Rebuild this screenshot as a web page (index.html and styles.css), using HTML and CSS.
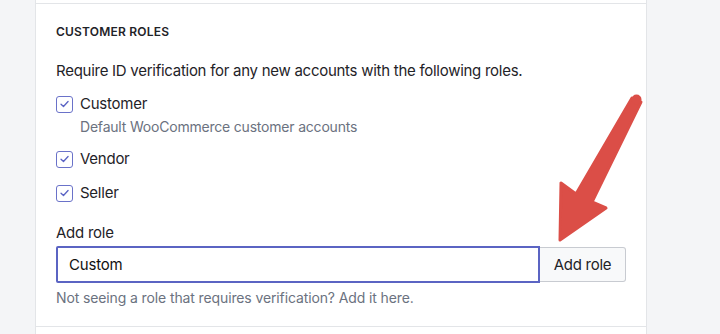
FILE: index.html
```html
<!DOCTYPE html>
<html lang="en">
<head>
<meta charset="utf-8">
<title>Customer roles</title>
<link rel="stylesheet" href="styles.css">
</head>
<body>
<div class="page">
  <div class="gutter"></div>
  <div class="card">
    <div class="card-top"></div>
    <section class="section">
      <h2 class="heading">Customer roles</h2>
      <p class="intro">Require ID verification for any new accounts with the following roles.</p>
      <div class="options">
        <div class="option">
          <label class="check-row"><span class="box"><svg viewBox="0 0 16 16" width="16" height="16"><path d="M4.3 8.2 L6.9 10.7 L11.8 5.4" fill="none" stroke="#5a63c4" stroke-width="1.4" stroke-linecap="round" stroke-linejoin="round"/></svg></span><span class="check-label">Customer</span></label>
          <div class="option-desc">Default WooCommerce customer accounts</div>
        </div>
        <div class="option">
          <label class="check-row"><span class="box"><svg viewBox="0 0 16 16" width="16" height="16"><path d="M4.3 8.2 L6.9 10.7 L11.8 5.4" fill="none" stroke="#5a63c4" stroke-width="1.4" stroke-linecap="round" stroke-linejoin="round"/></svg></span><span class="check-label">Vendor</span></label>
        </div>
        <div class="option">
          <label class="check-row"><span class="box"><svg viewBox="0 0 16 16" width="16" height="16"><path d="M4.3 8.2 L6.9 10.7 L11.8 5.4" fill="none" stroke="#5a63c4" stroke-width="1.4" stroke-linecap="round" stroke-linejoin="round"/></svg></span><span class="check-label">Seller</span></label>
        </div>
      </div>
      <div class="field-label">Add role</div>
      <div class="field-row">
        <div class="input">Custom</div>
        <button class="btn" type="button">Add role</button>
      </div>
      <p class="help">Not seeing a role that requires verification? Add it here.</p>
    </section>
  </div>
  <div class="gutter-right"></div>
</div>
<svg class="arrow" width="720" height="334" viewBox="0 0 720 334">
  <polygon points="632,98 576,194 561,183 560,240 606,208 592,202 641,102" fill="#db4e47" stroke="#db4e47" stroke-width="3" stroke-linejoin="round"/>
  <circle cx="636.5" cy="99.5" r="5" fill="#db4e47"/>
</svg>
</body>
</html>
```

FILE: styles.css
```css
* { box-sizing: border-box; }
html, body { margin: 0; padding: 0; }
body {
  width: 720px;
  height: 334px;
  overflow: hidden;
  background: #f4f5f7;
  font-family: Inter, "Noto Sans", "Liberation Sans", sans-serif;
  color: #1f2328;
  position: relative;
}
.page {
  display: flex;
  height: 334px;
}
.gutter { width: 35px; flex: none; }
.gutter-right { flex: 1; }
.card {
  width: 612px;
  flex: none;
  background: #fff;
  border-left: 1px solid #e3e5e8;
  border-right: 1px solid #e3e5e8;
}
.card-top { height: 3px; }
.section {
  border-top: 1px solid #e3e5e8;
  border-bottom: 1px solid #e3e5e8;
  padding: 20px 20px 18px 20px;
}
.heading {
  margin: 0;
  font-size: 12px;
  line-height: 16px;
  font-weight: 600;
  text-transform: uppercase;
  letter-spacing: 0.2px;
  color: #1f2328;
}
.intro {
  margin: 20px 0 0;
  font-size: 15px;
  line-height: 22px;
  letter-spacing: -0.27px;
  color: #1f2328;
}
.options {
  display: flex;
  flex-direction: column;
  gap: 12px;
  margin-top: 11px;
}
.check-row {
  display: flex;
  align-items: center;
  gap: 7px;
  height: 22px;
}
.box {
  width: 17px;
  height: 17px;
  border: 1px solid #6a72c9;
  border-radius: 3px;
  display: flex;
  align-items: center;
  justify-content: center;
  background: #fff;
}
.box svg { display: block; }
.check-label {
  font-size: 15px;
  line-height: 22px;
  letter-spacing: -0.25px;
  color: #1f2328;
}
.option-desc {
  margin: 3px 0 0 24px;
  font-size: 14px;
  line-height: 18px;
  letter-spacing: -0.2px;
  color: #6b7280;
}
.field-label {
  margin-top: 18px;
  font-size: 15px;
  line-height: 22px;
  letter-spacing: -0.25px;
  color: #1f2328;
}
.field-row {
  display: flex;
  align-items: center;
  margin-top: 2px;
}
.input {
  width: 484px;
  height: 37px;
  border: 2px solid #5b64c3;
  border-radius: 2px 0 0 2px;
  padding: 0 11px;
  display: flex;
  align-items: center;
  font-size: 15px;
  letter-spacing: -0.2px;
  color: #111;
  background: #fff;
}
.btn {
  width: 86px;
  height: 35px;
  border: 1px solid #c8cbd1;
  border-left: none;
  border-radius: 0 3px 3px 0;
  background: #f8f9fa;
  font-family: inherit;
  font-size: 15px;
  letter-spacing: -0.25px;
  color: #1f2328;
  padding: 0;
}
.help {
  margin: 5px 0 0;
  font-size: 14px;
  line-height: 20px;
  letter-spacing: -0.12px;
  color: #6b7280;
}
.arrow {
  position: absolute;
  left: 0;
  top: 0;
  pointer-events: none;
}
```
